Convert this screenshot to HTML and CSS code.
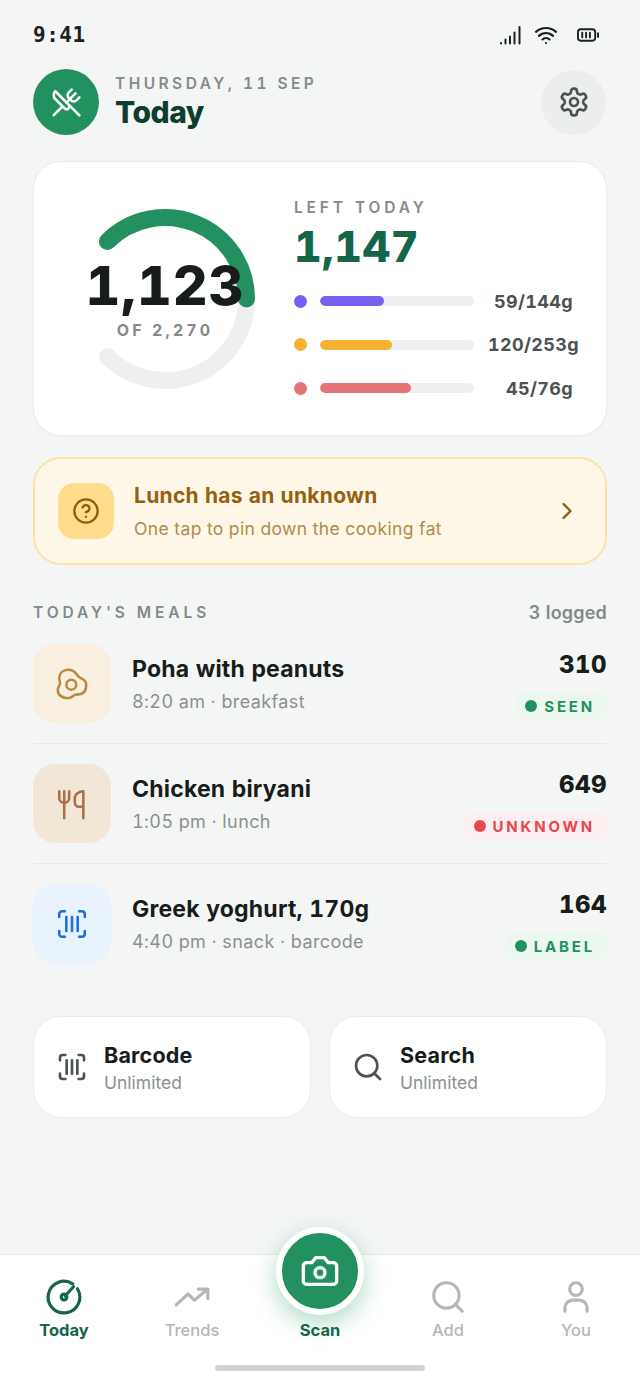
FILE: index.html
```html
<!DOCTYPE html>
<html lang="en">

<head>
    <meta charset="UTF-8">
    <meta name="viewport" content="width=device-width, initial-scale=1.0">
    <title>Today</title>
    <link rel="stylesheet" href="styles.css">
</head>

<body>
    <!-- Status bar -->
    <div class="status-bar">
        <span class="status-time">9:41</span>
        <div class="status-icons">
            <svg class="status-signal" width="24" height="20" viewBox="0 0 24 20">
                <path d="M2 18v.4M6.500 14.500v4M11 11.500v7M15.500 7.500v11M20.500 2v16.500" />
            </svg>
            <svg class="status-wifi" width="26" height="24" viewBox="0 0 24 24">
                <path d="M12 20h.01M2 8.820a15 15 0 0 1 20 0M5 12.860a10 10 0 0 1 14 0M8.500 16.430a5 5 0 0 1 7 0" />
            </svg>
            <svg class="status-battery" width="22" height="16" viewBox="0 0 23 16">
                <rect x="1" y="2" width="18" height="12" rx="3" />
                <path d="M5.500 5.500v5M9.500 5.500v5M13.500 5.500v5M22 6v4" />
            </svg>
        </div>
    </div>

    <!-- Header -->
    <header class="page-header">
        <div class="avatar">
            <svg class="icon" width="31" height="31" viewBox="0 0 24 24">
                <path d="m16 2-2.300 2.300a3 3 0 0 0 0 4.200l1.800 1.800a3 3 0 0 0 4.200 0L22 8" />
                <path d="M15 15 3.300 3.300a4.200 4.200 0 0 0 0 6l7.300 7.300c.7.7 2 .7 2.800 0L15 15Zm0 0 7 7" />
                <path d="m2.100 21.800 6.400-6.300M19 5l-7 7" />
            </svg>
        </div>
        <div class="header-text">
            <div class="header-date">THURSDAY, 11 SEP</div>
            <h1 class="header-title">Today</h1>
        </div>
        <button class="settings-btn">
            <svg class="icon" width="32" height="32" viewBox="0 0 24 24">
                <path d="M12.220 2h-.44a2 2 0 0 0-2 2v.18a2 2 0 0 1-1 1.730l-.43.25a2 2 0 0 1-2 0l-.15-.08a2 2 0 0 0-2.730.73l-.22.38a2 2 0 0 0 .73 2.730l.15.1a2 2 0 0 1 1 1.720v.51a2 2 0 0 1-1 1.740l-.15.09a2 2 0 0 0-.73 2.730l.22.38a2 2 0 0 0 2.730.73l.15-.08a2 2 0 0 1 2 0l.43.25a2 2 0 0 1 1 1.730V20a2 2 0 0 0 2 2h.44a2 2 0 0 0 2-2v-.18a2 2 0 0 1 1-1.730l.43-.25a2 2 0 0 1 2 0l.15.08a2 2 0 0 0 2.730-.73l.22-.39a2 2 0 0 0-.73-2.730l-.15-.08a2 2 0 0 1-1-1.740v-.5a2 2 0 0 1 1-1.740l.15-.09a2 2 0 0 0 .73-2.730l-.22-.38a2 2 0 0 0-2.730-.73l-.15.08a2 2 0 0 1-2 0l-.43-.25a2 2 0 0 1-1-1.730V4a2 2 0 0 0-2-2z" />
                <circle cx="12" cy="12" r="3" />
            </svg>
        </button>
    </header>

    <!-- Calories card -->
    <section class="hero-card">
        <div class="ring">
            <svg width="180" height="180" viewBox="0 0 180 180">
                <path class="ring-track" d="M32.400 32.400A81.500 81.500 0 1 1 32.400 147.600" />
                <path class="ring-fill" d="M32.400 32.400A81.500 81.500 0 0 1 171.500 90" />
            </svg>
            <div class="ring-text">
                <div class="ring-value">1,123</div>
                <div class="ring-sub">OF 2,270</div>
            </div>
        </div>
        <div class="hero-side">
            <div class="hero-label">LEFT TODAY</div>
            <div class="hero-value">1,147</div>
            <div class="macros">
                <div class="macro">
                    <span class="macro-dot protein"></span>
                    <span class="macro-bar"><span class="macro-fill protein" style="width: 41.5%"></span></span>
                    <span class="macro-text">59/144g</span>
                </div>
                <div class="macro">
                    <span class="macro-dot carbs"></span>
                    <span class="macro-bar"><span class="macro-fill carbs" style="width: 47%"></span></span>
                    <span class="macro-text macro-text-wide">120/253g</span>
                </div>
                <div class="macro">
                    <span class="macro-dot fat"></span>
                    <span class="macro-bar"><span class="macro-fill fat" style="width: 59%"></span></span>
                    <span class="macro-text">45/76g</span>
                </div>
            </div>
        </div>
    </section>

    <!-- Unknown ingredient prompt -->
    <section class="alert-card">
        <div class="alert-icon">
            <svg class="icon" width="28" height="28" viewBox="0 0 24 24">
                <circle cx="12" cy="12" r="10" />
                <path d="M9.090 9a3 3 0 0 1 5.830 1c0 2-3 3-3 3M12 17h.01" />
            </svg>
        </div>
        <div class="alert-text">
            <div class="alert-title">Lunch has an unknown</div>
            <div class="alert-sub">One tap to pin down the cooking fat</div>
        </div>
        <svg class="icon alert-chevron" width="28" height="28" viewBox="0 0 24 24">
            <path d="m9 18 6-6-6-6" />
        </svg>
    </section>

    <!-- Meals list -->
    <div class="section-head">
        <span class="section-title">TODAY'S MEALS</span>
        <span class="section-count">3 logged</span>
    </div>

    <div class="meals">
        <div class="meal">
            <div class="meal-icon egg">
                <svg class="icon" width="34" height="34" viewBox="0 0 24 24">
                    <circle cx="11.500" cy="12.500" r="3.500" />
                    <path d="M3 8c0-3.500 2.500-6 6.500-6 5 0 4.830 3 7.500 5s5 2 5 6c0 4.500-2.500 6.500-7 6.500-2.500 0-2.500 2.500-6 2.500s-7-2-7-5.500c0-3 1.500-3 1.500-5C3.500 10 3 9 3 8Z" />
                </svg>
            </div>
            <div class="meal-body">
                <div class="meal-name">Poha with peanuts</div>
                <div class="meal-sub">8:20 am · breakfast</div>
            </div>
            <div class="meal-side">
                <div class="meal-kcal">310</div>
                <span class="pill seen">SEEN</span>
            </div>
        </div>
        <div class="meal">
            <div class="meal-icon fork">
                <svg class="icon" width="34" height="34" viewBox="0 0 24 24">
                    <path d="M3 3v5c0 1.700 1.300 3 3 3h1a3 3 0 0 0 3-3V3M6.500 3v19M20 14V3c-3 0-6 2-6 5v3c0 1.700 1.300 3 3 3h3Zm0 0v8" />
                </svg>
            </div>
            <div class="meal-body">
                <div class="meal-name">Chicken biryani</div>
                <div class="meal-sub">1:05 pm · lunch</div>
            </div>
            <div class="meal-side">
                <div class="meal-kcal">649</div>
                <span class="pill unknown">UNKNOWN</span>
            </div>
        </div>
        <div class="meal">
            <div class="meal-icon scan">
                <svg class="icon" width="34" height="34" viewBox="0 0 24 24">
                    <path d="M3 7V5a2 2 0 0 1 2-2h2M17 3h2a2 2 0 0 1 2 2v2M21 17v2a2 2 0 0 1-2 2h-2M7 21H5a2 2 0 0 1-2-2v-2M8 7v10M12 7v10M16 7v10" />
                </svg>
            </div>
            <div class="meal-body">
                <div class="meal-name">Greek yoghurt, 170g</div>
                <div class="meal-sub">4:40 pm · snack · barcode</div>
            </div>
            <div class="meal-side">
                <div class="meal-kcal">164</div>
                <span class="pill label">LABEL</span>
            </div>
        </div>
    </div>

    <!-- Quick actions -->
    <div class="quick-row">
        <div class="quick-card">
            <svg class="icon" width="32" height="32" viewBox="0 0 24 24">
                <path d="M3 7V5a2 2 0 0 1 2-2h2M17 3h2a2 2 0 0 1 2 2v2M21 17v2a2 2 0 0 1-2 2h-2M7 21H5a2 2 0 0 1-2-2v-2M8 7v10M12 7v10M16 7v10" />
            </svg>
            <div>
                <div class="quick-title">Barcode</div>
                <div class="quick-sub">Unlimited</div>
            </div>
        </div>
        <div class="quick-card">
            <svg class="icon" width="32" height="32" viewBox="0 0 24 24">
                <circle cx="11" cy="11" r="8" />
                <path d="m21 21-4.300-4.300" />
            </svg>
            <div>
                <div class="quick-title">Search</div>
                <div class="quick-sub">Unlimited</div>
            </div>
        </div>
    </div>

    <!-- Bottom navigation -->
    <nav class="tab-bar">
        <div class="tab active">
            <svg class="icon" width="38" height="38" viewBox="0 0 24 24">
                <path d="M17.500 3.700A10 10 0 1 0 20.500 6.800" />
                <path d="M12.800 11.200 18 5.500" />
                <circle cx="12" cy="12" r="1.800" />
            </svg>
            <span>Today</span>
        </div>
        <div class="tab">
            <svg class="icon" width="38" height="38" viewBox="0 0 24 24">
                <path d="M22 7l-8.500 7-4-4L2 17M16 7h6v6" />
            </svg>
            <span>Trends</span>
        </div>
        <div class="tab active tab-scan">
            <div class="fab">
                <svg class="icon" width="40" height="40" viewBox="0 0 24 24">
                    <path d="M14.500 4h-5L7 7H4a2 2 0 0 0-2 2v9a2 2 0 0 0 2 2h16a2 2 0 0 0 2-2V9a2 2 0 0 0-2-2h-3l-2.500-3z" />
                    <circle cx="12" cy="13" r="3" />
                </svg>
            </div>
            <span>Scan</span>
        </div>
        <div class="tab">
            <svg class="icon" width="38" height="38" viewBox="0 0 24 24">
                <circle cx="11" cy="11" r="8" />
                <path d="m21 21-4.300-4.300" />
            </svg>
            <span>Add</span>
        </div>
        <div class="tab">
            <svg class="icon" width="38" height="38" viewBox="0 0 24 24">
                <path d="M19 21v-2a5 5 0 0 0-5-5h-4a5 5 0 0 0-5 5v2" />
                <circle cx="12" cy="7" r="4" />
            </svg>
            <span>You</span>
        </div>
        <div class="home-bar"></div>
    </nav>
</body>

</html>
```

FILE: styles.css
```css
/* General reset */
* {
    margin: 0;
    padding: 0;
    box-sizing: border-box;
}

body {
    width: 640px;
    height: 1385px;
    overflow: hidden;
    display: flex;
    flex-direction: column;
    background: #f4f6f5;
    color: #171d1b;
    font-family: 'Inter', sans-serif;
    font-variant-numeric: tabular-nums;
}

.icon {
    fill: none;
    stroke: currentColor;
    stroke-width: 2;
    stroke-linecap: round;
    stroke-linejoin: round;
    flex-shrink: 0;
}

/* Status bar */
.status-bar {
    height: 69px;
    padding: 0 41px 0 33px;
    display: flex;
    justify-content: space-between;
    align-items: center;
}

.status-time {
    font-family: 'DejaVu Sans Mono', monospace;
    font-size: 21px;
    font-weight: 700;
    letter-spacing: 0.5px;
    color: #1c2120;
}

.status-icons {
    display: flex;
    align-items: center;
    gap: 10px;
}

.status-icons svg {
    fill: none;
    stroke: #1c2120;
    stroke-linecap: round;
    stroke-linejoin: round;
}

.status-signal {
    stroke-width: 2;
}

.status-wifi {
    stroke-width: 2.2;
}

.status-battery {
    stroke-width: 2;
    margin-left: 8px;
}

/* Header */
.page-header {
    margin: 0 33px;
    height: 66px;
    display: flex;
    align-items: center;
    gap: 16px;
}

.avatar {
    width: 66px;
    height: 66px;
    border-radius: 50%;
    background: #22915f;
    color: #fff;
    display: flex;
    align-items: center;
    justify-content: center;
}

.header-text {
    flex: 1;
    margin-top: -1px;
}

.header-date {
    font-size: 15.500px;
    line-height: 20px;
    font-weight: 600;
    letter-spacing: 3.450px;
    color: #858b88;
}

.header-title {
    font-size: 30px;
    line-height: 36px;
    font-weight: 800;
    letter-spacing: -0.500px;
    color: #0e3d2d;
}

.settings-btn {
    width: 65px;
    height: 65px;
    margin-right: 1px;
    border: none;
    border-radius: 50%;
    background: #eceeee;
    color: #4c5250;
    display: flex;
    align-items: center;
    justify-content: center;
}

/* Calories card */
.hero-card {
    margin: 26px 33px 0;
    height: 275px;
    padding-left: 41px;
    display: flex;
    align-items: center;
    gap: 39px;
    background: #fff;
    border: 1px solid #e9ecec;
    border-radius: 28px;
    box-shadow: 0 1px 3px rgba(0, 0, 0, 0.03);
}

.ring {
    position: relative;
    width: 180px;
    height: 180px;
}

.ring svg {
    display: block;
    fill: none;
    stroke-width: 17;
    stroke-linecap: round;
}

.ring-track {
    stroke: #edeff0;
}

.ring-fill {
    stroke: #22915f;
}

.ring-text {
    position: absolute;
    inset: 0 -20px;
    padding-top: 47px;
    text-align: center;
}

.ring-value {
    font-size: 54px;
    line-height: 60px;
    font-weight: 800;
    letter-spacing: 1px;
    color: #171d1b;
}

.ring-sub {
    font-size: 16px;
    line-height: 20px;
    margin-top: 4px;
    font-weight: 700;
    letter-spacing: 3.100px;
    color: #858b88;
}

.hero-side {
    width: 285px;
}

.hero-label {
    font-size: 15.500px;
    line-height: 18px;
    margin-top: 1px;
    font-weight: 600;
    letter-spacing: 3.850px;
    color: #858b88;
}

.hero-value {
    font-size: 43px;
    line-height: 50px;
    margin-top: 4px;
    font-weight: 800;
    letter-spacing: 0.5px;
    color: #14654a;
}

.macros {
    margin-top: 19px;
    display: flex;
    flex-direction: column;
    gap: 21.500px;
}

.macro {
    height: 22px;
    display: flex;
    align-items: center;
}

.macro-dot {
    width: 13px;
    height: 13px;
    border-radius: 50%;
    margin-right: 13px;
}

.macro-bar {
    width: 154px;
    height: 10px;
    border-radius: 5px;
    background: #edeff0;
    overflow: hidden;
}

.macro-fill {
    display: block;
    height: 100%;
    border-radius: 5px;
}

.protein {
    background: #7660ee;
}

.carbs {
    background: #f7b231;
}

.fat {
    background: #e57478;
}

.macro-text {
    width: 99px;
    text-align: right;
    font-size: 18px;
    font-weight: 700;
    letter-spacing: 0.350px;
    white-space: nowrap;
    color: #4d5351;
}

/* the longest value runs past the others */
.macro-text-wide {
    width: 105px;
}

/* Unknown ingredient prompt */
.alert-card {
    margin: 21px 33px 0;
    height: 108px;
    padding: 0 23px;
    display: flex;
    align-items: center;
    background: #fff8e8;
    border: 2px solid #fbe3a6;
    border-radius: 28px;
}

.alert-icon {
    width: 56px;
    height: 56px;
    border-radius: 16px;
    background: #ffdc8c;
    color: #8f5e0c;
    display: flex;
    align-items: center;
    justify-content: center;
}

.alert-text {
    flex: 1;
    margin-left: 20px;
}

.alert-title {
    font-size: 21px;
    line-height: 28px;
    font-weight: 700;
    letter-spacing: 0.300px;
    color: #96600e;
}

.alert-sub {
    margin-top: 7px;
    font-size: 17.500px;
    line-height: 24px;
    letter-spacing: 0.400px;
    color: #b18b4b;
}

.alert-chevron {
    color: #8f5e0c;
    margin-right: 1px;
}

/* Meals list */
.section-head {
    margin: 37px 33px 0;
    height: 20px;
    display: flex;
    justify-content: space-between;
    align-items: center;
}

.section-title {
    font-size: 15.500px;
    font-weight: 600;
    letter-spacing: 3.900px;
    color: #828a87;
}

.section-count {
    font-size: 18px;
    font-weight: 600;
    letter-spacing: 0.200px;
    color: #828a87;
}

.meals {
    margin: 2px 33px 0;
}

.meal {
    padding: 20px 0;
    display: flex;
    align-items: center;
    border-bottom: 1px solid #e8ebea;
}

.meal:last-child {
    border-bottom: none;
}

.meal-icon {
    width: 78px;
    height: 79px;
    border-radius: 22px;
    display: flex;
    align-items: center;
    justify-content: center;
}

.meal-icon .icon {
    stroke-width: 1.800;
}

.egg {
    background: #f8efe0;
    color: #bb8a3f;
}

.fork {
    background: #f2e6d7;
    color: #a8704a;
}

.scan {
    background: #e8f3fe;
    color: #1f6fd6;
}

.meal-body {
    flex: 1;
    margin-left: 21px;
}

.meal-name {
    font-size: 23px;
    line-height: 30px;
    font-weight: 700;
    letter-spacing: 0.200px;
}

.meal-sub {
    margin-top: 6px;
    font-size: 18px;
    line-height: 24px;
    letter-spacing: 0.400px;
    color: #8b908e;
}

.meal-side {
    display: flex;
    flex-direction: column;
    align-items: flex-end;
    align-self: flex-start;
    margin-top: 6px;
}

.meal-kcal {
    font-size: 24px;
    line-height: 30px;
    font-weight: 800;
    letter-spacing: 0.500px;
}

.pill {
    height: 28px;
    margin-top: 12px;
    padding: 0 12px 0 9px;
    display: flex;
    align-items: center;
    gap: 7px;
    border-radius: 10px;
    font-size: 15px;
    font-weight: 700;
    letter-spacing: 2.800px;
}

.pill::before {
    content: '';
    width: 12px;
    height: 12px;
    border-radius: 50%;
    background: currentColor;
}

.seen,
.label {
    background: #ecf7f0;
    color: #22915f;
}

.unknown {
    background: #fdeeef;
    color: #e5484f;
}

/* Quick actions */
.quick-row {
    margin: 33px 33px 0;
    display: flex;
    gap: 18px;
}

.quick-card {
    flex: 1;
    height: 102px;
    padding: 0 22px;
    display: flex;
    align-items: center;
    gap: 16px;
    background: #fff;
    border: 1px solid #e9ecec;
    border-radius: 28px;
}

.quick-card .icon {
    color: #4c5250;
}

.quick-title {
    margin-top: 2px;
    font-size: 21.500px;
    line-height: 28px;
    font-weight: 700;
    letter-spacing: 0.200px;
}

.quick-sub {
    margin-top: 2px;
    font-size: 17.500px;
    line-height: 24px;
    color: #8b908e;
}

/* Bottom navigation */
.tab-bar {
    position: relative;
    margin-top: auto;
    height: 131px;
    display: grid;
    grid-template-columns: repeat(5, 1fr);
    background: #fff;
    border-top: 1px solid #e4e7e6;
}

.tab {
    padding-top: 23px;
    display: flex;
    flex-direction: column;
    align-items: center;
    color: #b4b8b7;
    font-size: 16.500px;
    line-height: 22px;
    font-weight: 500;
}

.tab .icon {
    margin-bottom: 3px;
}

.tab.active {
    color: #14654a;
    font-weight: 700;
}

.tab-scan {
    padding-top: 64px;
}

.fab {
    position: absolute;
    top: -28px;
    left: 276px;
    width: 88px;
    height: 88px;
    border: 6px solid #fff;
    border-radius: 50%;
    background: #22915f;
    color: #fff;
    display: flex;
    align-items: center;
    justify-content: center;
    box-shadow: 0 8px 24px rgba(34, 145, 95, 0.35);
}

.fab .icon {
    margin: 0;
}

.home-bar {
    position: absolute;
    left: 215px;
    bottom: 14px;
    width: 210px;
    height: 6px;
    border-radius: 3px;
    background: #d0d3d3;
}
```
